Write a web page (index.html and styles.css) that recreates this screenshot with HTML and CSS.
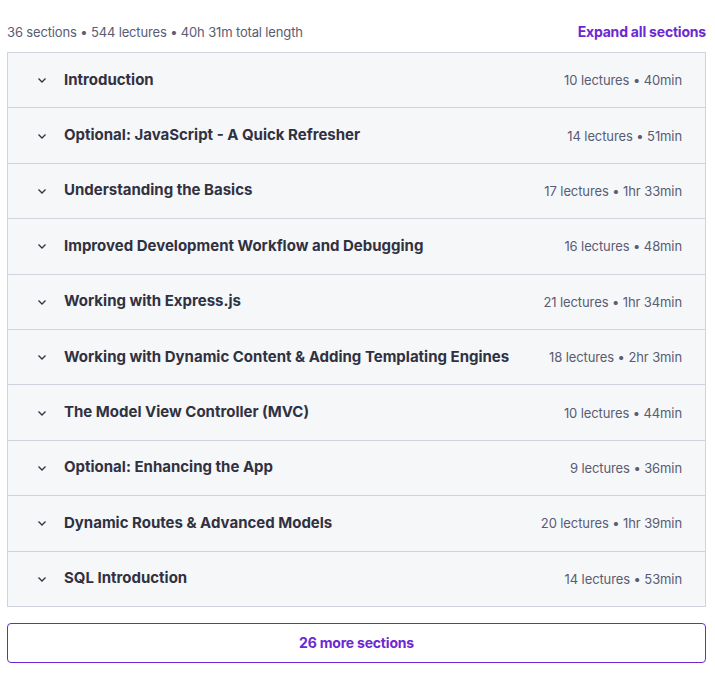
FILE: index.html
```html
<!DOCTYPE html>
<html>
<head>
<meta charset="utf-8">
<link rel="stylesheet" href="styles.css">
</head>
<body>
<div class="wrap">
  <div class="header">
    <span class="summary">36 sections • 544 lectures • 40h 31m total length</span>
    <span class="expand">Expand all sections</span>
  </div>
  <div class="list">
    <div class="row"><span class="chev"><svg width="12" height="12" viewBox="0 0 12 12"><path d="M2.5 4.5 L6 8 L9.5 4.5" fill="none" stroke="#303141" stroke-width="1.3"/></svg></span><span class="title">Introduction</span><span class="meta">10 lectures • 40min</span></div>
    <div class="row"><span class="chev"><svg width="12" height="12" viewBox="0 0 12 12"><path d="M2.5 4.5 L6 8 L9.5 4.5" fill="none" stroke="#303141" stroke-width="1.3"/></svg></span><span class="title">Optional: JavaScript - A Quick Refresher</span><span class="meta">14 lectures • 51min</span></div>
    <div class="row"><span class="chev"><svg width="12" height="12" viewBox="0 0 12 12"><path d="M2.5 4.5 L6 8 L9.5 4.5" fill="none" stroke="#303141" stroke-width="1.3"/></svg></span><span class="title">Understanding the Basics</span><span class="meta">17 lectures • 1hr 33min</span></div>
    <div class="row"><span class="chev"><svg width="12" height="12" viewBox="0 0 12 12"><path d="M2.5 4.5 L6 8 L9.5 4.5" fill="none" stroke="#303141" stroke-width="1.3"/></svg></span><span class="title">Improved Development Workflow and Debugging</span><span class="meta">16 lectures • 48min</span></div>
    <div class="row"><span class="chev"><svg width="12" height="12" viewBox="0 0 12 12"><path d="M2.5 4.5 L6 8 L9.5 4.5" fill="none" stroke="#303141" stroke-width="1.3"/></svg></span><span class="title">Working with Express.js</span><span class="meta">21 lectures • 1hr 34min</span></div>
    <div class="row"><span class="chev"><svg width="12" height="12" viewBox="0 0 12 12"><path d="M2.5 4.5 L6 8 L9.5 4.5" fill="none" stroke="#303141" stroke-width="1.3"/></svg></span><span class="title">Working with Dynamic Content &amp; Adding Templating Engines</span><span class="meta">18 lectures • 2hr 3min</span></div>
    <div class="row"><span class="chev"><svg width="12" height="12" viewBox="0 0 12 12"><path d="M2.5 4.5 L6 8 L9.5 4.5" fill="none" stroke="#303141" stroke-width="1.3"/></svg></span><span class="title">The Model View Controller (MVC)</span><span class="meta">10 lectures • 44min</span></div>
    <div class="row"><span class="chev"><svg width="12" height="12" viewBox="0 0 12 12"><path d="M2.5 4.5 L6 8 L9.5 4.5" fill="none" stroke="#303141" stroke-width="1.3"/></svg></span><span class="title">Optional: Enhancing the App</span><span class="meta">9 lectures • 36min</span></div>
    <div class="row"><span class="chev"><svg width="12" height="12" viewBox="0 0 12 12"><path d="M2.5 4.5 L6 8 L9.5 4.5" fill="none" stroke="#303141" stroke-width="1.3"/></svg></span><span class="title">Dynamic Routes &amp; Advanced Models</span><span class="meta">20 lectures • 1hr 39min</span></div>
    <div class="row"><span class="chev"><svg width="12" height="12" viewBox="0 0 12 12"><path d="M2.5 4.5 L6 8 L9.5 4.5" fill="none" stroke="#303141" stroke-width="1.3"/></svg></span><span class="title">SQL Introduction</span><span class="meta">14 lectures • 53min</span></div>
  </div>
  <div class="more">26 more sections</div>
</div>
</body>
</html>
```

FILE: styles.css
```css
* { box-sizing: border-box; }
body {
  margin: 0;
  background: #fff;
  font-family: Inter, "Noto Sans", sans-serif;
  color: #303141;
}
.wrap {
  margin-left: 7px;
  width: 699px;
}
.header {
  display: flex;
  justify-content: space-between;
  align-items: center;
  height: 24px;
  margin-top: 20px;
  margin-bottom: 8px;
}
.summary {
  font-size: 13px;
  color: #595c73;
  letter-spacing: -0.15px;
}
.expand {
  font-size: 14px;
  font-weight: 700;
  color: #6d28d2;
  letter-spacing: -0.2px;
  margin-top: -2px;
}
.list {
  border: 1px solid #d1d2e0;
  border-top: none;
}
.row {
  display: flex;
  align-items: center;
  height: 55.4px;
  padding: 0 23px 0 28px;
  background: #f6f7f9;
  border-top: 1px solid #d1d2e0;
}
.chev {
  width: 12px;
  height: 12px;
  display: flex;
  margin-right: 16px;
}
.title {
  flex: 1;
  font-size: 15px;
  font-weight: 700;
  color: #303141;
  letter-spacing: 0;
  margin-top: -2px;
}
.meta {
  font-size: 13px;
  color: #595c73;
  letter-spacing: -0.1px;
}
.more {
  margin-top: 16px;
  height: 40px;
  border: 1px solid #6d28d2;
  border-radius: 4px;
  display: flex;
  align-items: center;
  justify-content: center;
  padding-bottom: 1px;
  font-size: 14px;
  font-weight: 700;
  color: #6d28d2;
  letter-spacing: -0.2px;
}
```
